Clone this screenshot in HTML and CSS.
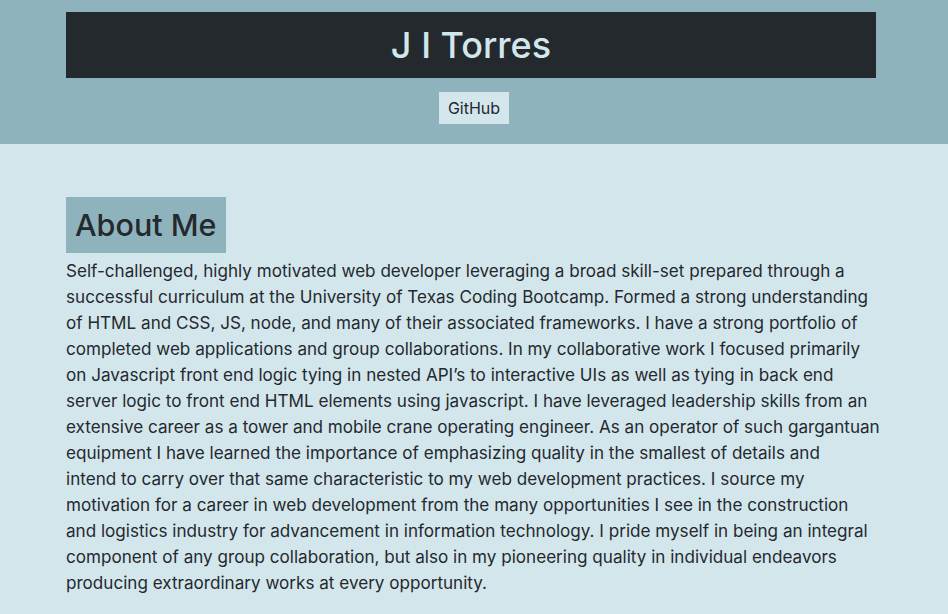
FILE: index.html
```html
<!DOCTYPE html>
<html lang="en">
<head>
<meta charset="utf-8">
<title>J I Torres</title>
<link rel="stylesheet" href="styles.css">
</head>
<body>
<header class="site-header">
  <div class="title-bar"><h1 class="title">J I Torres</h1></div>
  <nav class="nav"><a class="nav-link" href="#">GitHub</a></nav>
</header>
<main class="main">
  <section class="about">
    <h2 class="about-heading">About Me</h2>
    <p class="about-text">Self-challenged, highly motivated web developer leveraging a broad skill-set prepared through a<br>
successful curriculum at the University of Texas Coding Bootcamp. Formed a strong understanding<br>
of HTML and CSS, JS, node, and many of their associated frameworks. I have a strong portfolio of<br>
completed web applications and group collaborations. In my collaborative work I focused primarily<br>
on Javascript front end logic tying in nested API’s to interactive UIs as well as tying in back end<br>
server logic to front end HTML elements using javascript. I have leveraged leadership skills from an<br>
extensive career as a tower and mobile crane operating engineer. As an operator of such gargantuan<br>
equipment I have learned the importance of emphasizing quality in the smallest of details and<br>
intend to carry over that same characteristic to my web development practices. I source my<br>
motivation for a career in web development from the many opportunities I see in the construction<br>
and logistics industry for advancement in information technology. I pride myself in being an integral<br>
component of any group collaboration, but also in my pioneering quality in individual endeavors<br>
producing extraordinary works at every opportunity.</p>
  </section>
</main>
</body>
</html>
```
FILE: styles.css
```css
html, body {
  margin: 0;
  padding: 0;
}
body {
  font-family: Inter, "Noto Sans", sans-serif;
  background: #d3e6ec;
  color: #24292e;
}
.site-header {
  background: #8fb3bd;
  padding: 12px 0 20px;
  display: flex;
  flex-direction: column;
}
.title-bar {
  background: #24292e;
  width: 810px;
  height: 66px;
  margin-left: 66px;
  display: flex;
  align-items: center;
  justify-content: center;
}
.title {
  margin: 0;
  color: #d3e6ec;
  font-size: 36px;
  font-weight: 500;
  line-height: 1;
}
.nav {
  margin-top: 14px;
  display: flex;
  justify-content: center;
}
.nav-link {
  display: block;
  background: #d3e6ec;
  color: #24292e;
  text-decoration: none;
  font-size: 16px;
  line-height: 32px;
  padding: 0 9px;
}
.main {
  padding: 53px 0 20px 66px;
}
.about {
  width: 810px;
}
.about-heading {
  display: inline-block;
  margin: 0;
  background: #8fb3bd;
  font-size: 30.5px;
  font-weight: 500;
  line-height: 56px;
  padding: 0 9px;
}
.about-text {
  margin: 5px 0 0;
  font-size: 17.1px;
  line-height: 26px;
  white-space: nowrap;
}
```
